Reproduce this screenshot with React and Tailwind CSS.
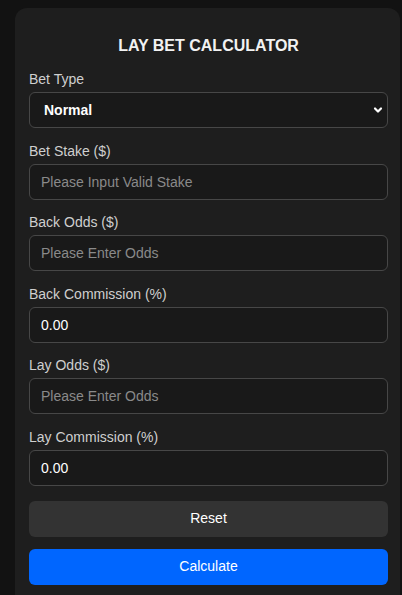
import React, { useState } from 'react';

const FIELDS = [
  { key: 'stake', label: 'Bet Stake ($)', placeholder: 'Please Input Valid Stake', init: '' },
  { key: 'backOdds', label: 'Back Odds ($)', placeholder: 'Please Enter Odds', init: '' },
  { key: 'backComm', label: 'Back Commission (%)', placeholder: '', init: '0.00' },
  { key: 'layOdds', label: 'Lay Odds ($)', placeholder: 'Please Enter Odds', init: '' },
  { key: 'layComm', label: 'Lay Commission (%)', placeholder: '', init: '0.00' },
];

const initial = Object.fromEntries(FIELDS.map((f) => [f.key, f.init]));

export default function App() {
  const [betType, setBetType] = useState('normal');
  const [values, setValues] = useState(initial);

  function reset() {
    setBetType('normal');
    setValues(initial);
  }

  return (
    <div className="min-h-[595px] bg-[#121212] pt-2 pl-[15px] pr-[2px] font-['Liberation_Sans',Arial,sans-serif]">
      <div className="rounded-t-xl bg-[#1e1e1e] pl-[14px] pr-[12px] pt-[29px] pb-4">
        <h2 className="text-center text-[16px] font-bold text-[#f2f2f2] leading-[18px] mb-[16px]">
          LAY BET CALCULATOR
        </h2>

        <div className="flex flex-col gap-[14.6px]">
          <div>
            <label className="block text-[14px] leading-[17px] text-[#cfcfcf] mb-[4px]">Bet Type</label>
            <div className="relative">
              <select
                value={betType}
                onChange={(e) => setBetType(e.target.value)}
                className="block w-full h-[36px] appearance-none rounded-md border border-[#474747] bg-[#191919] pl-[14px] pr-8 text-[14px] font-bold text-white outline-none"
              >
                <option value="normal">Normal</option>
                <option value="underlay">Underlay</option>
                <option value="overlay">Overlay</option>
              </select>
              <svg
                className="pointer-events-none absolute right-[4px] top-1/2 -translate-y-1/2"
                width="12"
                height="12"
                viewBox="0 0 12 12"
                fill="none"
                stroke="#ffffff"
                strokeWidth="2.2"
                strokeLinecap="round"
                strokeLinejoin="round"
              >
                <path d="M3 4.5 6 7.5 9 4.5" />
              </svg>
            </div>
          </div>

          {FIELDS.map((f) => (
            <div key={f.key}>
              <label className="block text-[14px] leading-[17px] text-[#cfcfcf] mb-[4px]">{f.label}</label>
              <input
                type="text"
                value={values[f.key]}
                placeholder={f.placeholder}
                onChange={(e) => setValues({ ...values, [f.key]: e.target.value })}
                className="block w-full h-[36px] rounded-md border border-[#474747] bg-[#191919] px-[11px] text-[14px] text-white placeholder:text-[#8a8a8a] outline-none"
              />
            </div>
          ))}
        </div>

        <button
          type="button"
          onClick={reset}
          className="mt-[15px] block w-full h-[36px] rounded-md bg-[#333333] text-[14px] text-white"
        >
          Reset
        </button>
        <button type="button" className="mt-[12px] block w-full h-[36px] rounded-md bg-[#0066ff] text-[14px] text-white">
          Calculate
        </button>
      </div>
    </div>
  );
}
